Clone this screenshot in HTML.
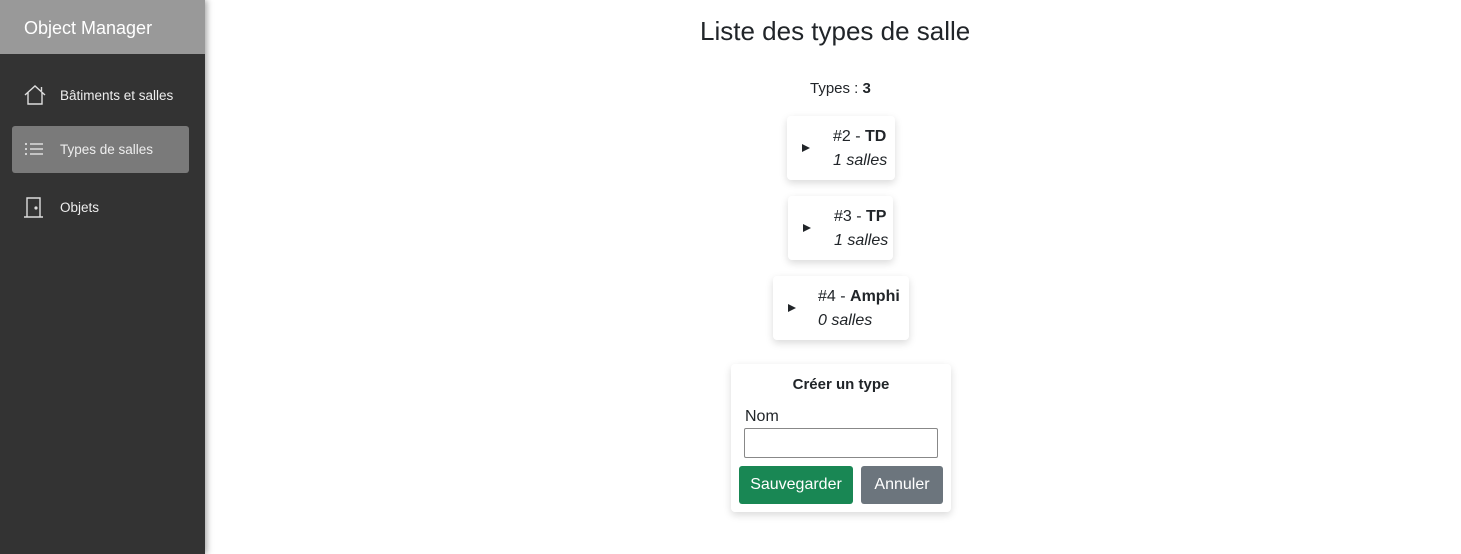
<!DOCTYPE html>
<html><head><meta charset="utf-8"><style>
*{box-sizing:border-box;margin:0;padding:0}
body{width:1461px;height:554px;background:#fff;font-family:"Liberation Sans",sans-serif;color:#212529;position:relative;overflow:hidden}
.side{position:absolute;left:0;top:0;width:205px;height:554px;background:#333;box-shadow:2px 0 6px rgba(0,0,0,.35)}
.head{height:54px;background:#999;color:#fff;font-size:18px;line-height:56px;padding-left:24px}
.item{position:absolute;left:12px;width:177px;height:47px;color:#eee;font-size:13.5px;line-height:47px;padding-left:48px}
.item svg{position:absolute;left:11px;top:12px}
.act{background:#7a7a7a;border-radius:3px}
.a{position:absolute}
.card{position:absolute;background:#fff;border-radius:4px;box-shadow:0 3px 8px rgba(0,0,0,.15);font-size:16px}
.tri{position:absolute;width:0;height:0;border-left:8px solid #212529;border-top:4.5px solid transparent;border-bottom:4.5px solid transparent}
.l1{position:absolute;white-space:nowrap}
.l2{position:absolute;white-space:nowrap;font-style:italic}
.btn{position:absolute;color:#fff;font-size:16px;text-align:center;line-height:38px;border-radius:3px}
</style></head><body>
<div class="side">
<div class="head">Object Manager</div>
<div class="item" style="top:72px"><svg width="24" height="22" viewBox="0 0 24 22" fill="none" stroke="#ddd" stroke-width="1.4"><path d="M2 11 L12 2 L22 11 M5 8.5 V20 H19 V8.5"/><path d="M18.5 3 V7"/></svg>Bâtiments et salles</div>
<div class="item act" style="top:126px"><svg width="22" height="22" viewBox="0 0 22 22" fill="#ddd" stroke="#ddd" stroke-width="1.4"><circle cx="3" cy="6" r="1.1" stroke="none"/><circle cx="3" cy="11" r="1.1" stroke="none"/><circle cx="3" cy="16" r="1.1" stroke="none"/><path d="M7 6H20M7 11H20M7 16H20" fill="none"/></svg>Types de salles</div>
<div class="item" style="top:184px"><svg width="22" height="24" viewBox="0 0 22 24" fill="none" stroke="#ddd" stroke-width="1.4"><path d="M4 2H17V21H4Z M1 21H20"/><circle cx="13" cy="12" r=".9" fill="#ddd"/></svg>Objets</div>
</div>
<div class="a" style="left:700px;top:16px;font-size:26px">Liste des types de salle</div>
<div class="a" style="left:810px;top:80px;font-size:15px">Types : <b>3</b></div>

<div class="card" style="left:787px;top:116px;width:108px;height:64px"><div class="tri" style="left:15px;top:28px"></div><div class="l1" style="left:46px;top:12px">#2 - <b>TD</b></div><div class="l2" style="left:46px;top:36px">1 salles</div></div>
<div class="card" style="left:788px;top:196px;width:105px;height:64px"><div class="tri" style="left:15px;top:28px"></div><div class="l1" style="left:46px;top:12px">#3 - <b>TP</b></div><div class="l2" style="left:46px;top:36px">1 salles</div></div>
<div class="card" style="left:773px;top:276px;width:136px;height:64px"><div class="tri" style="left:15px;top:28px"></div><div class="l1" style="left:45px;top:12px">#4 - <b>Amphi</b></div><div class="l2" style="left:45px;top:36px">0 salles</div></div>

<div class="card" style="left:731px;top:364px;width:220px;height:148px">
<div class="l1" style="left:0;width:220px;text-align:center;top:12px;font-weight:bold;font-size:15px">Créer un type</div>
<div class="l1" style="left:14px;top:44px;font-size:16px">Nom</div>
<div style="position:absolute;left:13px;top:64px;width:194px;height:30px;border:1px solid #888;border-radius:2px"></div>
<div class="btn" style="left:8px;top:102px;width:114px;background:#198754">Sauvegarder</div>
<div class="btn" style="left:130px;top:102px;width:82px;background:#6c757d">Annuler</div>
</div>
</body></html>
